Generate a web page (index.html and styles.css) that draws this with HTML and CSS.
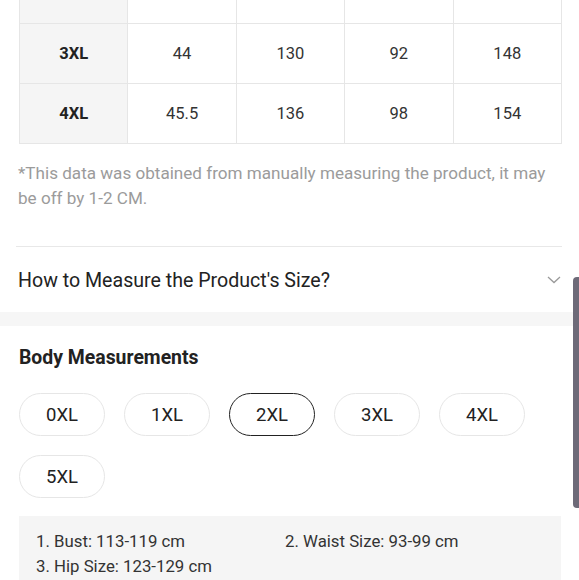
FILE: index.html
```html
<!DOCTYPE html>
<html>
<head>
<meta charset="utf-8">
<link rel="stylesheet" href="styles.css">
</head>
<body>
<div class="page">
  <section class="sizes">
    <table class="size-table">
      <tr><td class="head"></td><td></td><td></td><td></td><td></td></tr>
      <tr><td class="head">3XL</td><td>44</td><td>130</td><td>92</td><td>148</td></tr>
      <tr><td class="head">4XL</td><td>45.5</td><td>136</td><td>98</td><td>154</td></tr>
    </table>
    <p class="note">*This data was obtained from manually measuring the product, it may be off by 1-2 CM.</p>
    <div class="accordion">
      <span class="acc-title">How to Measure the Product's Size?</span>
      <svg class="chev" width="14" height="8" viewBox="0 0 14 8"><path d="M1 1 L7 6.5 L13 1" fill="none" stroke="#9a9a9a" stroke-width="1.3"/></svg>
    </div>
  </section>
  <div class="band"></div>
  <section class="body-meas">
    <h2 class="title">Body Measurements</h2>
    <div class="pills">
      <span class="pill">0XL</span>
      <span class="pill">1XL</span>
      <span class="pill active">2XL</span>
      <span class="pill">3XL</span>
      <span class="pill">4XL</span>
      <span class="pill">5XL</span>
    </div>
    <div class="info">
      <span>1. Bust: 113-119 cm</span>
      <span>2. Waist Size: 93-99 cm</span>
      <span>3. Hip Size: 123-129 cm</span>
    </div>
  </section>
</div>
<div class="scrollbar"></div>
</body>
</html>
```
FILE: styles.css
```css
* { box-sizing: border-box; }
html, body { margin: 0; padding: 0; background: #fff; }
body { font-family: Roboto, "Noto Sans", sans-serif; color: #222; width: 579px; height: 580px; overflow: hidden; position: relative; }
.page { width: 579px; }
.sizes { padding: 0 17px 0 19px; }
.size-table {
  width: 543px;
  border-collapse: collapse;
  table-layout: fixed;
  margin-top: -37px;
}
.size-table td {
  height: 60px;
  border: 1px solid #e6e6e6;
  text-align: center;
  font-size: 16.5px;
  color: #333;
  padding: 0;
}
.size-table td.head { background: #f5f5f5; font-weight: 700; color: #222; }
.note {
  margin: 17px 0 0 -1px;
  padding-right: 9px;
  font-size: 17.1px;
  line-height: 25px;
  color: #9b9b9b;
}
.accordion {
  margin: 35px 0 0 -3px;
  border-top: 1px solid #e8e8e8;
  height: 66px;
  display: flex;
  align-items: center;
  justify-content: space-between;
  padding: 1px 1px 0 2px;
}
.acc-title { font-size: 19.6px; color: #222; }
.chev { margin-top: 0; }
.band { height: 14px; background: #f6f6f6; }
.body-meas { padding: 20px 17px 0 19px; }
.title { margin: 0; font-size: 19.4px; line-height: 24px; font-weight: 700; color: #222; }
.pills {
  margin-top: 23px;
  display: flex;
  flex-wrap: wrap;
  gap: 19px 19px;
}
.pill {
  width: 86px;
  height: 43px;
  border: 1px solid #e6e6e6;
  border-radius: 22px;
  display: flex;
  align-items: center;
  justify-content: center;
  font-size: 18.5px;
  color: #222;
}
.pill.active { border: 1.3px solid #222; }
.info {
  margin-top: 18px;
  background: #f5f5f5;
  padding: 13px 17px 20px 17px;
  display: grid;
  grid-template-columns: 249px 1fr;
  font-size: 16.8px;
  line-height: 25px;
  color: #333;
  width: 542px;
}
.scrollbar {
  position: absolute;
  right: 0;
  top: 277px;
  width: 6px;
  height: 231px;
  background: #6d6a78;
  border-radius: 4px 0 0 4px;
}
```
